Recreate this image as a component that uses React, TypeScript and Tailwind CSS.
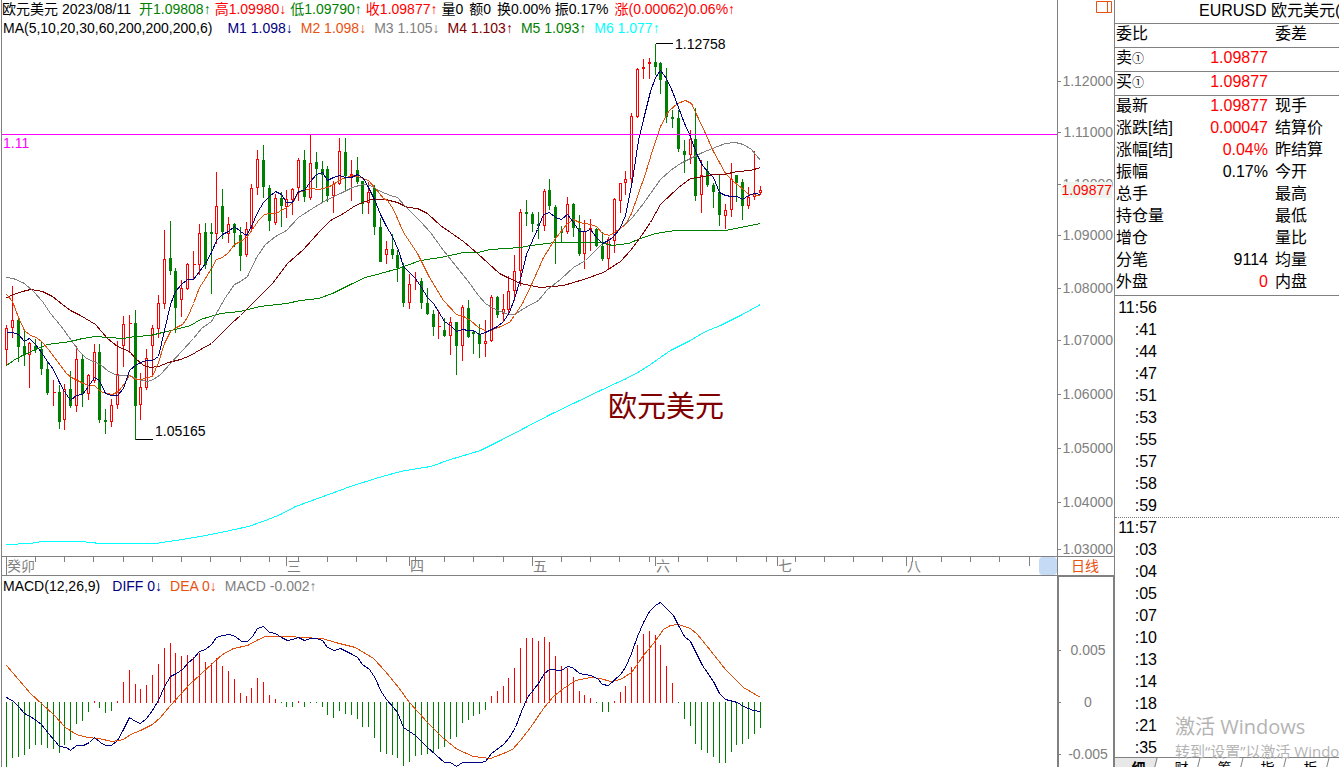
/**
 * EURUSD daily chart: candles with moving averages, MACD pane and quote panel.
 */

// [direction, high, low, body top, body bottom]
type Candle = ['u' | 'd', number, number, number, number];

const CANDLES: Candle[] = [
  ['u', 324, 364, 328, 349], ['u', 285, 337, 320, 327], ['d', 317, 361, 320, 346], ['d', 330, 365, 346, 354],
  ['u', 341, 387, 343, 354], ['d', 338, 352, 346, 348], ['d', 341, 374, 349, 368], ['d', 360, 394, 369, 392],
  ['u', 379, 405, 392, 392], ['d', 384, 428, 392, 421], ['u', 383, 429, 389, 419], ['d', 370, 407, 389, 405],
  ['u', 345, 411, 359, 405], ['d', 354, 406, 359, 393], ['u', 373, 399, 375, 393], ['u', 343, 382, 352, 380],
  ['d', 343, 422, 352, 419], ['d', 408, 433, 420, 421], ['u', 398, 426, 405, 421], ['u', 340, 408, 374, 404],
  ['u', 315, 366, 324, 345], ['u', 314, 352, 323, 323], ['d', 309, 439, 323, 405], ['u', 372, 419, 387, 404],
  ['u', 348, 389, 358, 387], ['u', 324, 376, 328, 345], ['u', 294, 337, 303, 328], ['u', 229, 308, 259, 303],
  ['d', 220, 274, 258, 270], ['d', 267, 332, 271, 307], ['u', 279, 316, 288, 299], ['u', 262, 289, 264, 288],
  ['u', 250, 278, 264, 264], ['u', 223, 274, 233, 264], ['d', 222, 268, 232, 264], ['d', 222, 293, 232, 233],
  ['u', 171, 243, 206, 233], ['d', 188, 238, 206, 231], ['u', 216, 242, 224, 233], ['d', 222, 246, 224, 232],
  ['d', 226, 270, 235, 255], ['u', 221, 256, 229, 254], ['u', 183, 230, 188, 228], ['u', 149, 194, 159, 187],
  ['d', 144, 197, 160, 186], ['d', 184, 230, 188, 220], ['u', 193, 224, 198, 222], ['d', 191, 226, 198, 205],
  ['u', 189, 217, 199, 206], ['u', 187, 214, 189, 199], ['u', 157, 200, 160, 187], ['d', 149, 201, 160, 196],
  ['u', 134, 199, 163, 197], ['d', 151, 187, 162, 168], ['d', 160, 202, 169, 174], ['d', 165, 201, 169, 195],
  ['u', 180, 212, 184, 195], ['u', 137, 184, 151, 183], ['d', 137, 190, 152, 175], ['u', 159, 200, 174, 175],
  ['d', 156, 183, 170, 181], ['d', 180, 213, 181, 203], ['u', 181, 213, 192, 202], ['d', 184, 234, 188, 226],
  ['d', 217, 261, 227, 261], ['u', 240, 263, 249, 254], ['d', 233, 258, 249, 254], ['d', 249, 281, 255, 267],
  ['d', 262, 306, 267, 302], ['u', 273, 308, 284, 302], ['u', 271, 289, 281, 281], ['d', 277, 308, 281, 302],
  ['d', 287, 314, 303, 313], ['d', 309, 335, 314, 326], ['u', 309, 338, 326, 326], ['d', 317, 336, 330, 335],
  ['u', 316, 354, 322, 335], ['d', 321, 374, 322, 345], ['u', 304, 360, 307, 345], ['d', 299, 337, 308, 336],
  ['d', 330, 353, 332, 333], ['d', 323, 357, 334, 343], ['u', 319, 356, 341, 343], ['u', 294, 341, 297, 340],
  ['d', 295, 317, 297, 314], ['u', 293, 321, 309, 313], ['u', 275, 313, 291, 309], ['u', 254, 300, 271, 290],
  ['u', 208, 285, 212, 270], ['d', 199, 225, 212, 213], ['d', 211, 231, 214, 223], ['d', 211, 238, 224, 225],
  ['u', 188, 230, 191, 225], ['d', 178, 209, 190, 205], ['d', 204, 263, 207, 237], ['d', 225, 241, 231, 232],
  ['u', 196, 233, 204, 231], ['d', 202, 236, 204, 227], ['d', 214, 255, 228, 253], ['u', 219, 268, 231, 253],
  ['u', 218, 250, 228, 229], ['d', 227, 246, 229, 245], ['d', 231, 260, 246, 258], ['u', 236, 269, 239, 258],
  ['u', 197, 252, 199, 240], ['u', 183, 212, 183, 200], ['u', 170, 194, 179, 182], ['u', 112, 184, 116, 178],
  ['u', 67, 117, 69, 116], ['u', 58, 78, 67, 68], ['u', 57, 78, 62, 63], ['d', 43, 74, 62, 66],
  ['d', 61, 93, 63, 79], ['d', 67, 122, 81, 116], ['d', 109, 127, 117, 118], ['d', 109, 151, 118, 148],
  ['d', 139, 172, 151, 154], ['u', 129, 163, 139, 154], ['d', 107, 200, 139, 195], ['u', 159, 212, 175, 194],
  ['d', 160, 186, 171, 184], ['d', 182, 207, 185, 191], ['d', 173, 225, 192, 214], ['u', 203, 228, 210, 215],
  ['u', 162, 216, 179, 209], ['d', 175, 201, 175, 182], ['d', 178, 219, 182, 205], ['u', 186, 208, 197, 205],
  ['u', 150, 199, 194, 196], ['u', 185, 194, 190, 192],
];

// Histogram bar lengths, positive = below the zero line
const MACD_BARS = [
  65, 56, 55, 53, 47, 43, 43, 46, 47, 51, 43, 38, 22, 19, 10, -1, 6, 11, 9, -1,
  -20, -32, -18, -13, -17, -27, -38, -54, -59, -49, -46, -47, -45, -49, -40, -39, -44, -36, -31, -23,
  -9, -6, -14, -24, -20, -7, -3, 1, 5, 5, -1, 5, 1, 1, 5, 13, 16, 9, 12, 13,
  17, 25, 25, 36, 50, 52, 53, 56, 64, 60, 54, 53, 52, 51, 47, 45, 37, 35, 21, 18,
  14, 12, 8, -6, -11, -16, -24, -34, -54, -64, -64, -61, -65, -60, -46, -36, -34, -25, -11, -7,
  -4, 1, 10, 10, -1, -10, -16, -35, -57, -68, -71, -67, -57, -36, -19, 1, 17, 24, 42, 48,
  51, 55, 61, 61, 50, 43, 42, 37, 32, 26,
];

const MA_LINES = [
  {
    color: '#00ffff',
    points:
      '6,544 30,543 42,541 80,541 100,543 155,543 175,540 200,536 225,531 248,526 265,520 280,514 295,506 320,497 350,486 375,478 400,471 430,466 450,459 480,450 500,440 525,427 550,414 575,402 600,390 615,383 624,379 639,371 650,364 670,350 690,340 705,331 720,325 740,315 760,304',
  },
  {
    color: '#008000',
    points:
      '6,365 13,360 22,355 35,349 47,344 70,341 82,338 95,336 122,338 135,336 150,335 162,332 175,329 190,325 200,319 220,313 240,311 259,306 286,303 300,300 318,298 332,293 350,284 365,277 380,273 398,268 420,260 440,257 463,252 477,252 490,249 520,247 530,245 555,242 600,242 612,245 628,243 640,238 655,233 675,230 725,230 740,227 760,223',
  },
  {
    color: '#800000',
    points:
      '6,297 13,294 22,291 30,289 42,291 52,296 62,304 70,310 80,315 95,324 107,338 117,346 129,351 135,358 143,365 150,367 158,366 168,362 180,359 190,355 200,349 211,343 222,332 232,322 240,315 253,302 272,283 287,263 303,249 320,230 330,220 343,213 355,205 370,199 385,199 397,202 407,207 417,208 427,213 440,225 463,241 477,253 499,273 507,277 520,283 540,287 563,285 583,279 603,272 620,261 630,250 639,238 650,222 660,204 678,187 690,178 698,177 713,174 723,174 737,171 750,170 760,167',
  },
  {
    color: '#808080',
    points:
      '6,277 13,278 24,283 33,291 42,301 50,313 60,325 71,340 78,350 86,358 93,361 100,364 108,371 117,375 129,375 137,379 147,381 153,379 160,374 170,363 182,350 193,338 201,328 211,321 217,311 225,297 234,284 240,281 247,276 256,257 265,244 275,236 286,230 298,217 312,208 325,200 340,193 352,187 362,184 370,185 380,191 390,195 397,197 405,206 420,221 430,232 443,250 455,265 467,280 478,295 485,303 493,308 500,311 508,314 514,314 525,307 538,300 547,289 560,279 573,267 585,260 595,250 602,243 610,239 620,228 632,217 643,203 650,193 660,179 670,170 680,163 692,157 702,152 712,148 725,143 735,142 743,144 751,149 760,160',
  },
  {
    color: '#e04f0c',
    points:
      '6,294 12,301 18,317 24,330 30,335 36,337 42,342 48,349 54,357 60,365 66,373 71,377 77,380 83,383 88,385 94,385 100,391 106,393 112,394 118,391 124,383 129,375 135,379 141,379 147,377 152,376 158,362 164,343 170,331 176,327 182,324 187,317 193,303 199,287 205,278 211,268 216,259 222,257 228,252 234,244 240,241 246,237 252,229 258,220 264,214 270,213 276,213 282,209 287,207 293,201 298,192 310,188 318,189 327,187 333,184 340,179 352,175 357,176 368,180 375,188 383,198 387,200 393,209 403,232 417,253 429,277 443,300 456,314 463,316 470,320 478,327 487,331 498,327 509,322 514,315 522,303 532,282 543,257 555,238 567,223 573,219 579,222 590,224 596,226 602,233 609,235 614,232 625,224 631,213 637,196 645,173 652,150 660,126 668,111 677,103 685,100 691,103 697,116 705,133 713,151 725,173 733,181 743,189 748,194 760,195',
  },
  {
    color: '#000080',
    points:
      '6,332 12,332 18,334 24,341 29,338 35,344 41,352 47,361 53,369 59,382 64,391 70,400 76,395 82,394 88,386 94,377 99,380 105,393 111,395 117,395 123,388 129,370 135,365 140,362 146,360 152,360 158,356 164,330 170,304 175,291 181,284 187,279 193,279 199,271 205,263 211,252 216,240 222,234 228,231 234,226 240,231 246,235 251,226 257,212 263,202 269,196 275,191 281,194 286,202 292,202 298,191 304,190 310,181 316,174 322,172 327,180 333,177 339,175 345,177 351,177 357,174 363,178 368,187 374,199 380,214 386,226 392,236 398,250 403,266 409,272 415,278 421,287 427,297 433,303 438,311 444,321 450,325 456,331 462,329 468,330 473,330 479,334 485,332 491,329 497,326 503,321 509,312 514,298 520,279 526,254 532,240 537,229 543,214 549,212 555,217 561,219 567,214 573,222 579,231 585,231 590,229 596,237 602,243 608,240 612,237 619,229 625,215 632,180 638,140 644,115 650,91 655,77 660,70 666,78 672,91 678,107 684,123 690,136 696,153 702,165 708,172 713,177 719,192 725,195 731,196 737,196 742,199 748,195 754,193 760,194',
  },
];

const MACD_LINES = [
  {
    color: '#e04f0c',
    points:
      '6,665 30,693 42,704 53,714 65,727 76,734 87,737 98,738 112,741 123,739 130,734 140,730 152,724 160,717 170,705 180,694 190,683 200,674 213,662 222,654 233,648 247,645 258,639 265,636 290,636 300,637 322,638 335,642 355,647 373,658 385,671 398,687 409,702 427,722 443,738 457,749 473,756 490,758 503,753 512,749 520,740 530,727 543,708 553,696 563,688 575,680 590,677 600,678 610,681 620,679 631,672 643,655 653,643 663,629 670,625 678,624 690,628 697,634 710,650 725,669 743,687 760,697',
  },
  {
    color: '#000080',
    points:
      '6,697 13,701 18,706 24,713 33,718 41,724 48,733 54,740 59,746 66,747 70,750 76,745 83,745 89,742 94,737 100,742 105,745 111,745 117,740 123,729 129,717 135,721 140,723 146,718 152,710 158,700 164,686 170,676 176,673 182,669 188,662 193,658 199,651 205,649 211,644 216,637 222,635 229,634 235,636 241,641 247,641 252,636 257,628 263,626 269,632 275,633 281,637 287,640 292,639 298,637 304,640 310,638 316,638 322,640 327,647 334,650 340,648 346,651 352,654 357,657 362,664 369,669 375,678 380,690 386,699 393,707 397,712 403,727 415,735 427,747 444,762 450,762 456,766 462,762 480,762 485,761 491,753 503,744 509,737 515,727 521,711 527,697 538,683 544,673 549,669 561,670 567,666 572,667 579,673 590,675 597,678 602,684 608,685 620,674 625,667 631,653 637,636 643,622 649,611 655,605 660,602 673,615 678,625 684,636 690,641 697,655 702,665 713,681 719,693 725,699 737,702 743,706 753,710 760,711',
  },
];

const HEADER = [
  { text: '欧元美元', cls: 'text-black' },
  { text: '2023/08/11', cls: 'mr-1 text-black' },
  { text: '开1.09808↑', cls: 'text-[#008000]' },
  { text: '高1.09980↓', cls: 'text-[#ff0000]' },
  { text: '低1.09790↑', cls: 'text-[#008000]' },
  { text: '收1.09877↑', cls: 'text-[#ff0000]' },
  { text: '量0', cls: 'mr-0.5 text-black' },
  { text: '额0', cls: 'mr-0.5 text-black' },
  { text: '换0.00%', cls: 'text-black' },
  { text: '振0.17%', cls: 'mr-0.5 text-black' },
  { text: '涨(0.00062)0.06%↑', cls: 'text-[#ff0000]' },
];

const MA_LEGEND = [
  { text: 'M1 1.098↓', cls: 'text-[#000080]' },
  { text: 'M2 1.098↓', cls: 'text-[#e9510f]' },
  { text: 'M3 1.105↓', cls: 'text-[#808080]' },
  { text: 'M4 1.103↑', cls: 'text-[#800000]' },
  { text: 'M5 1.093↑', cls: 'text-[#008000]' },
  { text: 'M6 1.077↑', cls: 'text-[#00ffff]' },
];

const PRICE_TICKS = [
  { label: '1.12000', y: 81 },
  { label: '1.11000', y: 132 },
  { label: '1.10000', y: 184 },
  { label: '1.09000', y: 235 },
  { label: '1.08000', y: 288 },
  { label: '1.07000', y: 340 },
  { label: '1.06000', y: 394 },
  { label: '1.05000', y: 448 },
  { label: '1.04000', y: 502 },
  { label: '1.03000', y: 549 },
];

const MACD_TICKS = [
  { label: '0.005', y: 650 },
  { label: '0', y: 702 },
  { label: '-0.005', y: 754 },
];

const MONTHS = [
  { label: '癸卯', x: 6, h: 18 },
  { label: '三', x: 286, h: 9 },
  { label: '四', x: 409, h: 9 },
  { label: '五', x: 532, h: 9 },
  { label: '六', x: 655, h: 9 },
  { label: '七', x: 777, h: 9 },
  { label: '八', x: 906, h: 9 },
  { label: '', x: 1029, h: 9 },
];

const MINOR_TICKS = Array.from({ length: 34 }, (_, i) => Math.round(35 + i * 29.22));

const QUOTE_HEAD = [
  { label: '委比', mark: '', value: '', second: '委差' },
  { label: '卖', mark: '①', value: '1.09877', second: '' },
  { label: '买', mark: '①', value: '1.09877', second: '' },
];

const QUOTE_ROWS = [
  { label: '最新', value: '1.09877', second: '现手', red: true },
  { label: '涨跌[结]', value: '0.00047', second: '结算价', red: true },
  { label: '涨幅[结]', value: '0.04%', second: '昨结算', red: true },
  { label: '振幅', value: '0.17%', second: '今开', red: false },
  { label: '总手', value: '', second: '最高', red: false },
  { label: '持仓量', value: '', second: '最低', red: false },
  { label: '增仓', value: '', second: '量比', red: false },
  { label: '分笔', value: '9114', second: '均量', red: false },
  { label: '外盘', value: '0', second: '内盘', red: true },
];

const TICKS_1156 = ['11:56', ':41', ':44', ':47', ':51', ':53', ':55', ':57', ':58', ':59'];
const TICKS_1157 = ['11:57', ':03', ':04', ':05', ':07', ':10', ':13', ':14', ':18', ':21', ':35'];

const TABS = ['细', '财', '筹', '指', '板'];

const barX = (i: number) => Math.round(6 + i * 5.843);

function PriceChart() {
  return (
    <svg className="block h-[518px] w-full" aria-label="EURUSD daily candles">
      <g transform="translate(-2 -38)">
        <g transform="translate(0.5 0.5)" shapeRendering="crispEdges" fill="none">
          {CANDLES.map(([dir, high, low, top, bottom], i) => {
            const x = barX(i);
            const color = dir === 'u' ? '#ff0000' : '#008000';
            return (
              <g key={i} stroke={color}>
                <line x1={x} y1={high} x2={x} y2={low} />
                <rect x={x - 1} y={top} width={2} height={bottom - top} fill={dir === 'u' ? '#ffffff' : color} />
                {bottom === top && <line x1={x - 1} y1={top} x2={x + 2} y2={top} />}
              </g>
            );
          })}
          {MA_LINES.map((line) => (
            <polyline key={line.color} points={line.points} stroke={line.color} />
          ))}
          <line x1="0" y1="134" x2="101%" y2="134" stroke="#ff00ff" />
          <path d="M655 43H672M135 439H152" stroke="#000000" />
        </g>
        <text x="3" y="148" fontSize="14" fill="#ff00ff">1.11</text>
        <text x="675" y="49" fontSize="14">1.12758</text>
        <text x="155" y="436" fontSize="14">1.05165</text>
        <text x="608" y="417" fontSize="29" fill="#800000">欧元美元</text>
      </g>
    </svg>
  );
}

function DateStrip() {
  return (
    <div className="flex h-5 shrink-0 border-y border-[#808080]">
      <svg className="block h-full min-w-0 flex-1" aria-label="Months">
        <g transform="translate(-2 0)" fill="#808080">
          {MINOR_TICKS.map((x) => (
            <rect key={x} x={x} y="0" width="1" height="5" />
          ))}
          {MONTHS.map((m) => (
            <g key={m.x}>
              <rect x={m.x} y="0" width="1" height={m.h} />
              <text x={m.x + 1} y="14" fontSize="14">{m.label}</text>
            </g>
          ))}
        </g>
      </svg>
      <button type="button" aria-label="Scroll" className="w-[18px] rounded bg-[#c5dbf5]" />
    </div>
  );
}

function MacdChart() {
  return (
    <svg className="block min-h-0 w-full flex-1" aria-label="MACD">
      <g transform="translate(-2 -596)" shapeRendering="crispEdges">
        {MACD_BARS.map((v, i) => (
          <rect
            key={i}
            x={barX(i)}
            y={v > 0 ? 702 : 702 + v}
            width="1"
            height={Math.abs(v) + (v > 0 ? 0 : 1)}
            fill={v > 0 ? '#008000' : '#ff0000'}
          />
        ))}
        <g transform="translate(0.5 0.5)" fill="none">
          {MACD_LINES.map((line) => (
            <polyline key={line.color} points={line.points} stroke={line.color} />
          ))}
        </g>
      </g>
    </svg>
  );
}

function Axis() {
  return (
    <div className="flex w-[57px] shrink-0 flex-col">
      <svg className="block h-[556px] w-full shrink-0 border-l border-[#808080]" aria-label="Price axis">
        {PRICE_TICKS.map((t) => (
          <g key={t.label} fill="#808080">
            <rect x="0" y={t.y} width="3" height="1" />
            <text x="55" y={t.y + 5} fontSize="14" textAnchor="end">{t.label}</text>
          </g>
        ))}
        <path d="M2 190L6 182H54V198H6Z" fill="#eef5ee" />
        <text x="54" y="195" fontSize="14" textAnchor="end" fill="#ff0000">1.09877</text>
        <path d="M38.5 1.5H53.5V12.5H38.5ZM49.5 1.5V12.5" fill="none" stroke="#e9510f" />
      </svg>
      <button
        type="button"
        className="h-[19px] shrink-0 border-l border-t border-[#808080] pr-0.5 text-center text-sm leading-[18px] text-[#e9510f]"
      >
        日线
      </button>
      <svg
        className="block min-h-0 w-full flex-1 border-l-2 border-r border-t-2 border-[#808080]"
        aria-label="MACD axis"
      >
        {MACD_TICKS.map((t) => (
          <g key={t.label} fill="#808080">
            <rect x="0" y={t.y - 577} width="2" height="1" />
            <text x="29" y={t.y - 572} fontSize="14" textAnchor="middle">{t.label}</text>
          </g>
        ))}
      </svg>
    </div>
  );
}

function QuotePanel() {
  return (
    <aside className="relative flex w-[225px] shrink-0 flex-col overflow-hidden border-l border-[#808080] text-base">
      <h1 className="h-6 shrink-0 overflow-hidden whitespace-nowrap border-b border-[#808080] pl-[84px] leading-[22px]">
        EURUSD 欧元美元(
      </h1>
      <table className="w-full shrink-0 table-fixed border-separate border-spacing-0 whitespace-nowrap leading-5">
        <colgroup>
          <col className="w-[70px]" />
          <col className="w-[83px]" />
          <col />
        </colgroup>
        <tbody>
          {QUOTE_HEAD.map((row) => (
            <tr key={row.label} className="h-6 align-top">
              <th scope="row" className="border-b border-[#808080] p-0 pl-px text-left font-normal">
                {row.label}
                <span className="align-middle text-xs leading-none">{row.mark}</span>
              </th>
              <td className="border-b border-[#808080] p-0 text-right text-[#ff0000]">{row.value}</td>
              <td className="border-b border-[#808080] p-0 pl-[7px]">{row.second}</td>
            </tr>
          ))}
          {QUOTE_ROWS.map((row) => (
            <tr key={row.label} className="h-[22px] align-top">
              <th scope="row" className="p-0 pl-px text-left font-normal">{row.label}</th>
              <td className={row.red ? 'p-0 text-right text-[#ff0000]' : 'p-0 text-right'}>{row.value}</td>
              <td className="p-0 pl-[7px]">{row.second}</td>
            </tr>
          ))}
        </tbody>
      </table>
      <div className="mt-px min-h-0 flex-1 overflow-hidden border-t border-[#808080] pt-px leading-[22px]">
        <ol className="border-b border-dotted border-[#808080]">
          {TICKS_1156.map((t) => (
            <li key={t} className="w-[42px] text-right">{t}</li>
          ))}
        </ol>
        <ol className="-mt-px">
          {TICKS_1157.map((t) => (
            <li key={t} className="w-[42px] text-right">{t}</li>
          ))}
        </ol>
      </div>
      <div className="flex h-[10px] shrink-0 overflow-hidden border-t border-[#808080]">
        {TABS.map((tab, i) => (
          <button
            key={tab}
            type="button"
            className={
              i === 0
                ? 'flex h-5 w-[43px] shrink-0 items-center bg-[#e8e8e8] text-sm font-bold'
                : 'flex h-5 w-[43px] shrink-0 items-center text-sm'
            }
          >
            <span className="flex-1 pl-3 text-center leading-5">{tab}</span>
            <svg className="h-5 w-2" aria-hidden="true">
              <path d="M3 20L8 0V20Z" fill="#ffffff" />
              <path d="M2 20L7 0" fill="none" stroke="#808080" />
            </svg>
          </button>
        ))}
      </div>
      <div className="pointer-events-none absolute bottom-1 left-[60px] whitespace-nowrap font-['Open_Sans','Noto_Sans_CJK_SC',sans-serif] text-[#b4b4b4]">
        <p className="text-[20px] leading-6">激活 Windows</p>
        <p className="text-[15px] leading-6">转到“设置”以激活 Windows。</p>
      </div>
    </aside>
  );
}

export default function App() {
  return (
    <div className="flex h-screen min-h-[640px] overflow-hidden bg-white font-['Liberation_Sans','Noto_Sans_CJK_SC',sans-serif] text-black">
      <main className="ml-px flex min-w-0 flex-1 flex-col overflow-hidden border-l border-[#808080] text-sm">
        <div className="flex h-[19px] shrink-0 gap-1 whitespace-nowrap leading-[19px]">
          {HEADER.map((h) => (
            <span key={h.text} className={h.cls}>{h.text}</span>
          ))}
        </div>
        <div className="flex h-[19px] shrink-0 gap-2 whitespace-nowrap pl-px leading-[19px]">
          <span className="mr-[7px]">MA(5,10,20,30,60,200,200,200,6)</span>
          {MA_LEGEND.map((m) => (
            <span key={m.text} className={m.cls}>{m.text}</span>
          ))}
        </div>
        <PriceChart />
        <DateStrip />
        <div className="flex h-5 shrink-0 gap-2 whitespace-nowrap pl-px leading-5">
          <span className="mr-1">MACD(12,26,9)</span>
          <span className="text-[#000080]">DIFF 0↓</span>
          <span className="text-[#e9510f]">DEA 0↓</span>
          <span className="text-[#808080]">MACD -0.002↑</span>
        </div>
        <MacdChart />
      </main>
      <Axis />
      <QuotePanel />
    </div>
  );
}
